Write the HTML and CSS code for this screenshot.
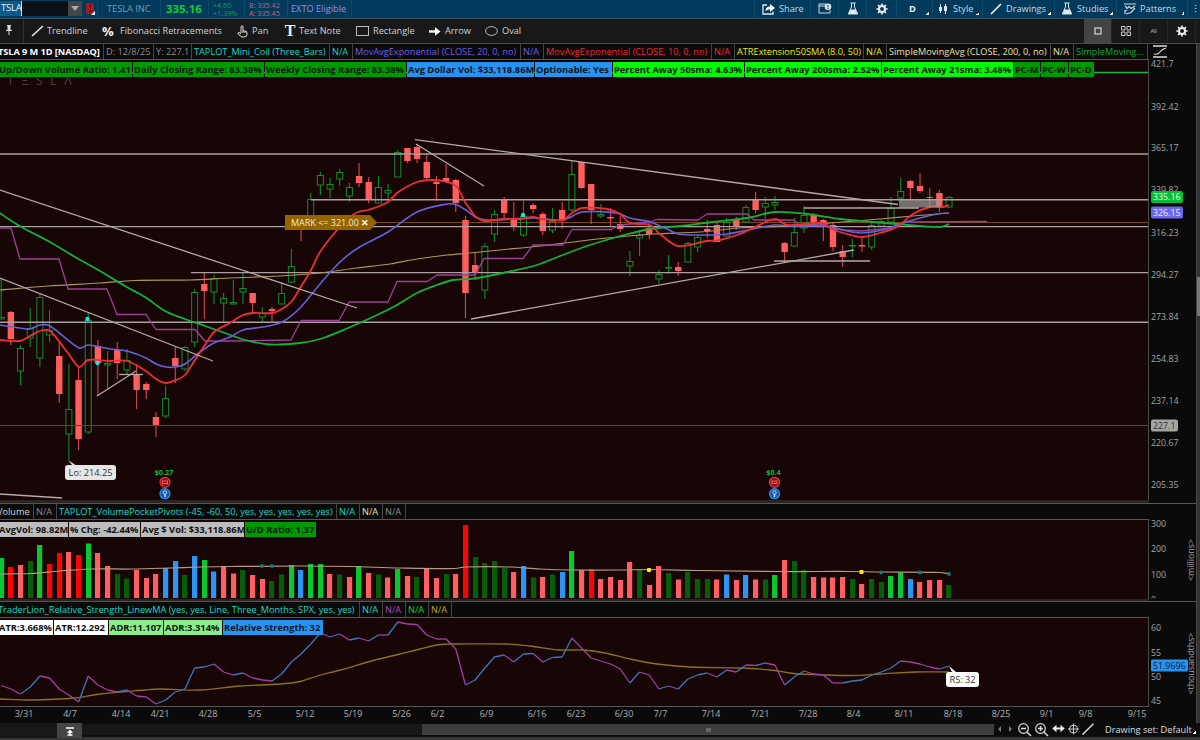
FILE: index.html
```html
<!DOCTYPE html>
<html lang="en">
<head>
<meta charset="utf-8">
<title>TSLA chart</title>
<link rel="stylesheet" href="styles.css">
</head>
<body>
<div class="app">
  <header class="topbar">
    <div class="symbol"><span class="symbol-input">TSLA</span><span class="symbol-drop"><svg width="8" height="5"><path d="M0 0h8L4 5z" fill="#aaa"/></svg></span></div>
    <div class="link-badge"><svg width="10" height="13"><rect x="0" y="0" width="8" height="11" rx="1.5" fill="#b01414"/><path d="M3 3l1.5-1v6M2.5 8.5h3" stroke="#500" fill="none"/><path d="M9 8v4H5z" fill="#fff"/></svg></div>
    <div class="tcell company">TESLA INC</div>
    <div class="tcell last">335.16</div>
    <div class="tcell two change"><span>+4.60</span><span>+1.39%</span></div>
    <div class="tcell two bidask"><span>B: 335.42</span><span>A: 335.45</span></div>
    <div class="tcell exto">EXTO Eligible</div>
    <div class="tspace"></div>
    <div class="tcell share"><svg width="13" height="12"><path d="M5 2H1v9h10V8.500" fill="none" stroke="#dfe8ee" stroke-width="1.300"/><path d="M3.500 8.500C3.500 5 5 3.500 8 3.500V1l5 4-5 4V6.500C6 6.500 4.500 7 3.500 8.500z" fill="#fff"/></svg><span>Share</span></div>
    <div class="tcell ic w28"><svg width="14" height="11"><path d="M8 1H1v9h11V7" fill="none" stroke="#cfdae2"/><path d="M1 3h7" stroke="#cfdae2"/><circle cx="10" cy="3.800" r="3.300" fill="#dfe8ee"/><path d="M10 2v2.500M10 5v1" stroke="#013a5a"/></svg></div>
    <div class="tcell ic w28"><svg width="12" height="13"><path d="M3.500 1h5M4.500 1v4L1.300 12h9.400L7.500 5V1" fill="none" stroke="#dfe8ee"/><path d="M3.500 7.500h5l2 4.500h-9z" fill="#dfe8ee"/></svg></div>
    <div class="tcell ic w29"><svg width="12" height="12" viewBox="-6 -6 12 12"><circle r="3" fill="none" stroke="#eee" stroke-width="2"/><path d="M0-3.500V-5.600M0 3.500V5.600M-3.500 0H-5.600M3.500 0H5.600M2.500-2.500L4-4M-2.500 2.500L-4 4M-2.500-2.500L-4-4M2.500 2.500L4 4" stroke="#eee" stroke-width="1.700"/></svg></div>
    <div class="tcell dcell corner"><b>D</b></div>
    <div class="tcell style corner"><svg width="11" height="12"><path d="M2.500 1v9M7.500 1v10" stroke="#dfe8ee"/><rect x="1" y="4" width="3" height="4" fill="#dfe8ee"/><rect x="6" y="3" width="3" height="5" fill="#dfe8ee"/></svg><span>Style</span></div>
    <div class="tcell drawings corner"><svg width="12" height="12"><path d="M1 11L11 1" stroke="#fff" stroke-width="1.600"/></svg><span>Drawings</span></div>
    <div class="tcell studies corner"><svg width="12" height="13"><path d="M3.500 1h5M4.500 1v4L1.300 12h9.400L7.500 5V1" fill="none" stroke="#dfe8ee"/><path d="M3.500 7.500h5l2 4.500h-9z" fill="#dfe8ee"/></svg><span>Studies</span></div>
    <div class="tcell patterns corner"><svg width="12" height="12"><path d="M0 1h12M1 2.500l2 3 2-2 2 2 4-2.500M1 11V7.500h2M2 11l5-1.500L11 5" fill="none" stroke="#cfdae2" stroke-width="1.200"/></svg><span>Patterns</span></div>
    <div class="tcell more">⋮</div>
  </header>

  <div class="drawbar">
    <div class="pin"><svg width="6" height="10"><path d="M1 .5h4M2 1v4M4 1v4M0 5.500h6M3 5v5" stroke="#ddd" fill="none"/><rect x="2" y="1" width="2" height="4" fill="#ddd"/></svg></div>
    <div class="tool t1"><svg width="13" height="12"><path d="M1 11L12 1" stroke="#eee" stroke-width="1.500"/></svg><span>Trendline</span></div>
    <div class="tool t2"><b class="pct">%</b><span>Fibonacci Retracements</span></div>
    <div class="tool t3"><svg width="11" height="13"><path d="M4 8V1.500q1-1.500 2 0V6h2q2 0 2 2v1.500q0 2.500-3 2.500H5Q3.500 12 .8 8q1-1.500 3.200.8M6 6v2M8 6v2" fill="none" stroke="#ddd"/></svg><span>Pan</span></div>
    <div class="tool t4"><b class="tee">T</b><span>Text Note</span></div>
    <div class="tool t5"><svg width="13" height="10"><rect x=".5" y=".5" width="12" height="9" fill="none" stroke="#bbb"/></svg><span>Rectangle</span></div>
    <div class="tool t6"><svg width="12" height="9"><path d="M0 4.500h7" stroke="#fff" stroke-width="2.400"/><path d="M6 .3l5.500 4.200L6 8.700z" fill="#fff"/></svg><span>Arrow</span></div>
    <div class="tool t7"><svg width="13" height="10"><ellipse cx="6.500" cy="5" rx="5.900" ry="4.400" fill="none" stroke="#bbb"/></svg><span>Oval</span></div>
    <div class="tspace"></div>
    <div class="view on"><svg width="8" height="8"><rect x="1" y="1" width="6" height="6" fill="none" stroke="#ccc" stroke-width="1.300"/></svg></div>
    <div class="view"><svg width="10" height="10"><path d="M.5.500h3.500v3.500H.5zM6 .5h3.500v3.500H6zM.5 6h3.500v3.500H.5zM6 6h3.500v3.500H6z" fill="none" stroke="#ccc"/></svg></div>
    <div class="view all">All</div>
    <div class="view"><svg width="12" height="12" viewBox="-6 -6 12 12"><circle r="3" fill="none" stroke="#eee" stroke-width="2"/><path d="M0-3.500V-5.600M0 3.500V5.600M-3.500 0H-5.600M3.500 0H5.600M2.500-2.500L4-4M-2.500 2.500L-4 4M-2.500-2.500L-4-4M2.500 2.500L4 4" stroke="#eee" stroke-width="1.700"/></svg></div>
  </div>

  <main class="workspace">
    <div class="panes">
      <section class="pane price">
        <div class="studies-row main-row">
          <span class="s a0">TSLA 9 M 1D [NASDAQ]</span><span class="s a1">D: 12/8/25</span><span class="s a2">Y: 227.1</span><span class="s a3 cyan">TAPLOT_Mini_Coil (Three_Bars)</span><span class="s n cyan">N/A</span><span class="s a5 violet">MovAvgExponential (CLOSE, 20, 0, no)</span><span class="s n violet">N/A</span><span class="s a5 red">MovAvgExponential (CLOSE, 10, 0, no)</span><span class="s n red">N/A</span><span class="s a9 yellow">ATRExtension50SMA (8.0, 50)</span><span class="s n yellow">N/A</span><span class="s a11 cream">SimpleMovingAvg (CLOSE, 200, 0, no)</span><span class="s n cream">N/A</span><span class="s a13 green">SimpleMoving...</span>
        </div>
        <div class="corner-cell"><svg width="14" height="13"><path d="M0 1h14M0 12h14" stroke="#ddd" stroke-width="1.500"/><path d="M1 9q4 1 6-2t6-4" fill="none" stroke="#ddd" stroke-width="1.200"/></svg></div>
        <div class="plot">
          <svg id="price" width="1149" height="440" viewBox="0 60 1149 440"></svg>
          <div class="watermark">TΞSLΛ</div>
          <div class="labels">
            <span class="g1 l0">Up/Down Volume Ratio: 1.41</span><span class="g1 l1">Daily Closing Range: 83.38%</span><span class="g1 l2">Weekly Closing Range: 83.38%</span><span class="b1 l3">Avg Dollar Vol: $33,118.86M</span><span class="b1 l4">Optionable: Yes</span><span class="g2 l5">Percent Away 50sma: 4.63%</span><span class="g2 l6">Percent Away 200sma: 2.52%</span><span class="g2 l7">Percent Away 21sma: 3.48%</span><span class="g1 l8">PC-M</span><span class="g1 l9">PC-W</span><span class="g1 l10">PC-D</span>
          </div>
          <div class="mark">MARK &lt;= 321.00 <b>✕</b></div>
          <div class="bubble lo">Lo: 214.25</div>
        </div>
        <svg class="axis" id="priceAxis" width="47" height="440" viewBox="1149 60 47 440"></svg>
      </section>
      <section class="pane volume">
        <div class="studies-row">
          <span class="s v0">Volume</span><span class="s v1 grey">N/A</span><span class="s v2 cyan">TAPLOT_VolumePocketPivots (-45, -60, 50, yes, yes, yes, yes, yes)</span><span class="s n cyan">N/A</span><span class="s n cream">N/A</span><span class="s n grey">N/A</span>
        </div>
        <div class="corner-cell"></div>
        <div class="plot">
          <svg id="volume" width="1149" height="79" viewBox="0 520 1149 79"></svg>
          <div class="labels">
            <span class="w1 m0">AvgVol: 98.82M</span><span class="w1 m1">% Chg: -42.44%</span><span class="w1 m2">Avg $ Vol: $33,118.86M</span><span class="g1 m3">U/D Ratio: 1.37</span>
          </div>
        </div>
        <svg class="axis" id="volumeAxis" width="47" height="79" viewBox="1149 520 47 79"></svg>
      </section>
      <section class="pane strength">
        <div class="studies-row">
          <span class="s r0 cyan">TraderLion_Relative_Strength_LinewMA (yes, yes, Line, Three_Months, SPX, yes, yes)</span><span class="s n cyan2">N/A</span><span class="s n mag">N/A</span><span class="s n green2">N/A</span><span class="s n gold">N/A</span>
        </div>
        <div class="corner-cell"></div>
        <div class="plot">
          <svg id="strength" width="1149" height="88" viewBox="0 618 1149 88"></svg>
          <div class="labels">
            <span class="w2 q0">ATR:3.668%</span><span class="w2 q1">ATR:12.292</span><span class="p1 q2">ADR:11.107</span><span class="p1 q3">ADR:3.314%</span><span class="b1 q4">Relative Strength: 32</span>
          </div>
          <div class="bubble rs">RS: 32</div>
        </div>
        <svg class="axis" id="strengthAxis" width="47" height="88" viewBox="1149 618 47 88"></svg>
      </section>
      <svg class="dates" id="dates" width="1196" height="17" viewBox="0 706 1196 17"></svg>
    </div>
    <div class="edge"><div class="grip"></div></div>
  </main>

  <footer class="bottombar">
    <div class="jump"><svg width="8" height="9"><path d="M0 1h8" stroke="#fff" stroke-width="1.500"/><path d="M4 2.500l3 3.500H1z" fill="#fff"/><path d="M1.500 8h5M4 5v3" stroke="#fff" stroke-width="1.500"/></svg></div>
    <div class="scroll"><i></i></div>
    <div class="nav"><svg width="16" height="6"><path d="M4 0v6L1 3zM12 0v6l3-3z" fill="#777"/></svg></div>
    <div class="zooms">
      <svg width="14" height="14"><circle cx="5.500" cy="5.500" r="4.800" fill="none" stroke="#ddd" stroke-width="1.200"/><path d="M3 5.500h5M9 9l4 4" stroke="#ddd" stroke-width="1.500"/></svg>
      <svg width="14" height="14"><circle cx="5.500" cy="5.500" r="4.800" fill="none" stroke="#ddd" stroke-width="1.200"/><path d="M3 5.500h5M5.500 3v5M9 9l4 4" stroke="#ddd" stroke-width="1.500"/></svg>
      <svg width="13" height="14"><path d="M2 5.500h9" stroke="#eee" stroke-width="2"/><path d="M4.500 1.800v7.400L.3 5.500zM8.500 1.800v7.400l4.200-3.700z" fill="#eee"/></svg>
      <svg width="11" height="14"><circle cx="5.500" cy="6" r="4" fill="none" stroke="#ccc"/><path d="M5.500 .5v11M0 6h11" stroke="#ccc"/></svg>
      <svg width="12" height="14"><path d="M.5 11.500L11.500 .800" stroke="#ddd" stroke-width="1.500"/></svg>
    </div>
    <div class="set">Drawing set: Default</div>
  </footer>
</div>
<script src="chart.js"></script>
</body>
</html>
```

FILE: styles.css
```css
* { box-sizing: border-box; }
body {
  margin: 0;
  background: #0a0a0a;
  color: #d2d2d2;
  font-family: "Open Sans", "Noto Sans", sans-serif;
  font-size: 9.2px;
  line-height: 14px;
}
svg { display: block; flex: none; }
.app { width: 1200px; height: 740px; overflow: hidden; display: flex; flex-direction: column; white-space: nowrap; }

.topbar { height: 19px; flex: none; display: flex; background: #013a5a; border-bottom: 1px solid #3b4f5c; }
.tcell { display: flex; align-items: center; gap: 5px; border-right: 1px solid #0c4a6b; padding-bottom: 1px; }
.tspace { flex: 1; }
.symbol { width: 82px; display: flex; padding: 1px 0 2px; }
.symbol-input { width: 68px; padding-left: 1px; color: #e8f0f6; background: linear-gradient(90deg, #0a5a8e 21px, #ddd 21px, #ddd 22px, #0b1014 22px); font-size: 9.5px; letter-spacing: -.2px; }
.symbol-drop { width: 14px; background: #454545; display: grid; place-items: center; }
.link-badge { width: 16px; padding: 3px 0 0 4px; border-right: 1px solid #0c4a6b; }
.company { width: 63px; padding-left: 9px; color: #7b9aae; }
.last { width: 48px; padding-left: 5px; color: #0bcd3c; font-weight: 700; font-size: 11.4px; }
.tcell.two { flex-direction: column; align-items: flex-start; gap: 0; font-size: 7.2px; line-height: 8px; padding: 1px 0 0 4px; }
.change { width: 36px; color: #15a04c; }
.bidask { width: 43px; color: #cc6074; }
.exto { width: 64px; padding-left: 3px; color: #a488f4; }
.share { width: 57px; padding-left: 7px; border-left: 1px solid #0c4a6b; gap: 4px; }
.share, .style, .drawings, .studies, .patterns { color: #ccd9e2; }
.ic { justify-content: center; }
.w28 { width: 28px; } .w29 { width: 30px; }
.corner { background: linear-gradient(135deg, transparent 50%, #fff 50%) right 3px bottom 3px / 3px 3px no-repeat; }
.dcell { width: 36px; padding-left: 12px; color: #eee; }
.style { width: 50px; padding-left: 5px; gap: 4px; }
.drawings { width: 72px; padding-left: 7px; gap: 4px; }
.studies { width: 62px; padding-left: 6px; gap: 4px; }
.patterns { width: 71px; padding-left: 7px; gap: 4px; }
.more { width: 12px; padding-left: 3px; border: 0; color: #eee; }

.drawbar { height: 25px; flex: none; display: flex; align-items: stretch; background: #181818; border-bottom: 1px solid #4a4a4a; }
.pin { width: 24px; padding: 6px 0 0 6px; border-right: 1px solid #303030; }
.tool { display: flex; align-items: center; gap: 3px; color: #d2d2d2; }
.t1 { width: 71px; padding-left: 7px; }
.t2 { width: 135px; padding-left: 7px; }
.t3 { width: 47px; padding-left: 7px; gap: 4px; }
.t4 { width: 72px; padding-left: 7px; }
.t5 { width: 73px; padding-left: 7px; gap: 4px; }
.t6 { width: 57px; padding-left: 7px; gap: 4px; }
.t7 { width: 50px; padding-left: 6px; gap: 4px; }
.pct { font-size: 13px; width: 15px; color: #eee; }
.tee { font: 700 16px "Liberation Serif", serif; width: 12px; text-align: center; color: #eee; }
.view { width: 28px; display: grid; place-items: center; border-right: 1px solid #252525; }
.view.on { background: #444; }
.view:last-child { margin-right: 4px; }
.all { font-size: 6px; color: #bbb; letter-spacing: -.3px; }

.workspace { height: 679px; flex: none; display: flex; }
.panes { width: 1196px; display: flex; flex-direction: column; }
.edge { width: 4px; background: #333; border-left: 1px solid #484848; padding-top: 233px; }
.grip { height: 39px; background: #777; }

.pane { flex: none; display: grid; grid-template-columns: 1149px 47px; background: linear-gradient(90deg, #2a2424 1149px, #0a0a0a 1149px); }
.price { height: 459px; grid-template-rows: 16px 440px; }
.volume { height: 98px; grid-template-rows: 16px 79px; }
.strength { height: 105px; grid-template-rows: 16px 88px; }
.volume, .strength { border-top: 1px solid #555; }
.studies-row { display: flex; background: #0a0a0a; border-bottom: 1px solid #555; }
.s { flex: none; height: 100%; border-right: 1px solid #444; padding-left: 2px; line-height: 15px; }
.n { width: 23px; }
.a0 { width: 104px; color: #fff; font-weight: 700; padding: 0; text-indent: -2px; letter-spacing: -.05px; }
.a1 { width: 50px; color: #8e8e8e; } .a2 { width: 38px; color: #8e8e8e; }
.a3 { width: 138px; } .a5 { width: 168px; } .a9 { width: 129px; } .a11 { width: 164px; } .a13 { width: 74px; }
.v0 { width: 34px; padding: 0; text-indent: -3px; } .v1 { width: 23px; } .v2 { width: 280px; }
.r0 { width: 360px; padding: 0; text-indent: -2px; }
.cyan, .cyan2 { color: #20d4c4; } .violet { color: #6c60e4; } .red { color: #ee2c30; } .yellow { color: #e8e818; }
.cream { color: #e8e0ac; } .green { color: #12a33c; } .green2 { color: #18cc28; } .grey { color: #8a8a8a; }
.mag { color: #b046bc; } .gold { color: #c2a42c; }
.corner-cell { padding: 1px 0 0 4px; background: #0a0a0a; }
.plot { position: relative; background: #180506; overflow: hidden; border-right: 1px solid #4a4a4a; }
.axis { background: #0a0a0a; overflow: visible; }
.labels { position: absolute; left: 0; top: 2px; display: flex; gap: 1px; font-weight: 700; font-size: 9.3px; line-height: 15px; }
.labels span { height: 15px; padding-left: 1px; color: #031a08; }
.labels .g1 { background: #009a00; } .labels .g2 { background: #00fa00; } .labels .b1 { background: #2893ee; color: #04162c; }
.labels .w1 { background: #bdbdbd; color: #111; } .labels .w2 { background: #fff; color: #111; } .labels .p1 { background: #8cec8c; }
.labels .l0, .labels .m0, .labels .q0 { padding: 0; text-indent: -1px; }
.l0 { width: 132px; } .l1 { width: 131px; } .l2 { width: 141px; } .l3 { width: 127px; } .l4 { width: 77px; } .l5 { width: 131px; }
.l6 { width: 136px; } .l7 { width: 131px; } .l8 { width: 26px; } .l9 { width: 27px; } .l10 { width: 25px; }
.m0 { width: 68px; } .m1 { width: 71px; } .m2 { width: 103px; } .m3 { width: 71px; }
.q0 { width: 53px; } .q1 { width: 54px; } .q2 { width: 54px; } .q3 { width: 58px; } .q4 { width: 100px; }
.watermark { position: absolute; left: 7px; top: 14px; color: #4e4040; font-size: 12.5px; letter-spacing: 7.500px; line-height: 14px; clip-path: inset(4px 0 0 0); }
.mark { position: absolute; left: 285px; top: 155px; width: 92px; height: 15px; padding-left: 6px; color: #f3ead2; background: #946400; clip-path: polygon(0 0, 85px 0, 92px 50%, 85px 100%, 0 100%); line-height: 15px; font-size: 9px; }
.mark b { color: #fff; font-size: 9px; }
.bubble { position: absolute; height: 15px; border-radius: 3px; text-align: center; color: #333; line-height: 16px; }
.lo { left: 65px; top: 405px; width: 51px; background: #e6e6e6; }
.rs { left: 946px; top: 54px; width: 33px; background: #fff; }

.bottombar { height: 17px; flex: none; display: flex; background: #0c0c0c; border-bottom: 3px solid #363636; }
.jump { width: 83px; height: 15px; padding: 4px 0 0 66px; background: linear-gradient(90deg, #171717 57px, #444 57px, #444 82px, #171717 82px); }
.scroll { width: 911px; height: 11px; margin-top: 1px; display: grid; justify-items: start; align-items: center; background: linear-gradient(90deg, #171717 339px, #3d3d3d 339px); padding-left: 623px; }
.scroll i { width: 5px; height: 4px; background: #666; }
.nav { width: 24px; padding: 3px 0 0 3px; }
.zooms { display: flex; gap: 3px; width: 87px; }
.set { color: #ddd; line-height: 13px; width: 95px; background: linear-gradient(135deg, transparent 50%, #fff 50%) right 4px bottom 3px / 3px 3px no-repeat; }

.ax { fill: #a4a4a4; font-size: 8.800px; }
.date { fill: #b2b2b2; font-size: 9px; text-anchor: middle; }
```

FILE: chart.js
```js
const byId = id => document.getElementById(id);
const X0 = 1.2, STEP = 9.672;
const bx = i => X0 + i * STEP;
const line = (x1, y1, x2, y2, c, w = 1, o = 1) => `<line x1="${x1}" y1="${y1}" x2="${x2}" y2="${y2}" stroke="${c}" stroke-width="${w}" opacity="${o}"/>`;
const rect = (x, y, w, h, c, extra = '') => `<rect x="${x}" y="${y}" width="${w}" height="${h}" fill="${c}" ${extra}/>`;
const poly = (pts, c, w) => `<polyline points="${pts}" fill="none" stroke="${c}" stroke-width="${w}" stroke-linejoin="round"/>`;
const text = (x, y, s, cls, extra = '') => `<text x="${x}" y="${y}" class="${cls}" ${extra}>${s}</text>`;

const curve = (pts, c, w) => {
  const q = pts.split(' ').map(s => s.split(',').map(Number));
  const m = q.map((pt, i) => {
    if (!i || i === q.length - 1) return null;
    return (q[i + 1][1] - q[i - 1][1]) / (q[i + 1][0] - q[i - 1][0]);
  });
  const slope = (i, j) => (q[j][1] - q[i][1]) / (q[j][0] - q[i][0]);
  let d = `M${q[0]}`;
  for (let i = 1; i < q.length; i++) {
    const a = m[i - 1] ?? slope(i - 1, i), b = m[i] ?? slope(i - 1, i), h = (q[i][0] - q[i - 1][0]) / 3;
    d += `C${q[i - 1][0] + h},${q[i - 1][1] + a * h} ${q[i][0] - h},${q[i][1] - b * h} ${q[i]}`;
  }
  return `<path d="${d}" fill="none" stroke="${c}" stroke-width="${w}"/>`;
};

/* candles: direction, high, body top, body bottom, low */
const candles = `g278,317,319,319 r311,312,339,345 g345,348,371,385 g308,328,338,347 g293,297,358,367 g310,330,335,342 r342,356,394,403
g364,409,434,460 r367,380,439,450 g312,320,432,434 r340,346,363,396 g351,363,365,389 r342,350,363,379 g349,360,370,375 r364,374,390,409
r382,384,390,399 r412,417,425,437 g386,398,416,418 r347,358,366,383 g346,347,369,371 g289,292,342,347 r273,284,291,319 g275,278,292,304
g293,298,303,323 g280,302,304,304 g272,288,292,304 r293,293,303,314 g307,313,317,322 r307,309,311,322 g283,293,304,304 g249,266,282,283
r219,220,229,241 g193,199,229,230 g172,175,185,195 g178,184,189,198 g169,172,179,186 g183,187,196,202 r163,176,183,187 r177,182,200,203
g176,187,203,203 g184,190,193,202 g150,152,177,177 r148,148,161,163 r144,147,159,163 r153,162,178,181 r176,182,184,201 r164,178,182,183
r179,180,203,212 r216,220,293,318 r252,265,273,280 g243,246,290,299 g210,214,234,242 r197,199,213,219 r202,220,226,231 g201,216,235,237
r203,205,209,213 r212,214,231,235 g208,221,230,233 r202,210,220,229 g161,174,210,212 r162,162,188,189 r184,184,210,224 g204,214,216,218
r208,217,218.500,227 r216,224,229,232 g251,261,266,276 g230,235,238,256 r220,228,234,239 g270,274,279,284 g255,267,268,274 r262,267,271,276
g242,243,262,262 g235,237,247,252 r220,229,231,238 r223,225,242,242 g218,222,236,237 r217,219,226,230 g205,207,222,222 r192,199,210,213
g197,203,207,219 g196,202,205,210 r242,243,252,262 g218,232,246,247 g206,215,228,233 r213,215,222,223 r219,220,225,241 r222,225,247,251
r245,251,257,267 g239,245,246,257 r237,245,246.500,252 g223,225,247,250 g220,221,226,226 g197,208,222,224 g178,191,198,202 r180,181,188,200
r173,186,191,193 r188,197,198,207 r190,193,207,212 g196,197,207,208`.split(/\s+/);

let p = '';
p += line(0, 72.5, 1149, 72.5, '#16b83c', 1.5);
p += line(376, 222.5, 1149, 222.5, '#744c0c', 1.2);
candles.forEach((s, i) => {
  const [h, t, b, l] = s.slice(1).split(',').map(Number), x = bx(i);
  if (s[0] === 'g') {
    p += line(x, h, x, t, '#118c2c', 1.1) + line(x, b, x, l, '#118c2c', 1.1);
    p += rect(x - 3, t + .5, 6, Math.max(b - t - .5, .6), 'none', 'stroke="#118c2c"');
  } else {
    p += line(x, h, x, l, '#d04c4c', 1.1) + rect(x - 3.2, t, 6.4, b - t, '#ff5e5e');
  }
});
[[0, 154], [311, 199.700], [0, 226.600], [191, 272.600], [0, 322.300]].forEach(([x, y]) => { p += line(x, y, 1149, y, '#aaa0a0', 1.4); });
p += line(0, 425.5, 1149, 425.5, '#544646', 1);
p += curve('0,290 48,286 100,283 135,280.500 190,280 230,278 280,276 320,273 357,268 390,264 417,259 447,255 470,253 500,250 540,246 573,242 607,238 653,234 700,232 740,228 787,226 830,223 880,219 913,216 949,213', '#ab9858', 1.2);
p += poly('0,228 11,228 20,259 59,259 68,289 107,289 117,314.500 146,314.500 156,329.500 195,329.500 205,341 230,341 291,340 301,320.500 339,320.500 349,302 388,302 397,281.500 427,281.500 437,275 475,275 484,258.500 523,258.500 533,245 563,245 572,229.500 611,229.500 620,225 650,222 657,219.500 698,220 707,214 747,214 754,220 794,220 799,225 823,225 843,230 862,231 893,228 904,222 987,221.500', '#9c4298', 1.3);
p += curve('0,213 10,220 25,229 50,242 75,257 100,271 125,286 145,297 165,311 185,319 205,326 225,333 245,340 270,344.500 300,343 320,339 348,328 377,315 397,305 417,293 437,285 453,280 470,279 483,277 507,272 537,265 560,256 590,245 617,237 650,229 680,226 713,222 747,218 775,212 807,214 840,219 873,222 897,224 940,227 949,224', '#10b236', 1.8);
p += curve('0,325 20,328 30,329 40,325 50,326 79,348 88,345 110,349 127,351 146,358 156,364 166,367 176,367 185,364 200,352 214,343 230,337 243,330 263,327 282,322 300,308 320,284 340,262 358,248 388,232 417,212 447,204 457,205 470,213 475,217 487,220 533,218 563,220 582,212 617,213 630,218 650,222 667,229 678,234 707,235 727,234 753,229 775,225 793,226 823,226 847,231 862,233 883,230 900,224 920,218 937,214 949,213', '#6560dc', 1.6);
p += curve('0,340 20,341 30,336 40,331 50,331 68,353 79,367 88,360 110,361 127,361 146,371 156,379 166,383 176,380 185,375 195,360 205,345 214,332 230,323 243,315 253,313 272,313 282,309 292,301 300,288 310,272 320,252 337,230 347,219 358,212 368,210 388,202 397,193 417,182 433,180 447,182 457,187 465,202 470,209 475,216 485,221 503,219 520,219 533,217 543,219 563,220 572,213 582,208 607,209 620,214 630,223 650,225 660,234 678,246 707,241 720,240 737,235 753,228 775,219 787,225 823,223 832,229 847,234 862,237 880,233 897,227 913,214 930,207 943,207 949,205', '#ec2f33', 1.8);
p += rect(899, 200, 41, 7.500, '#9d9999', 'opacity=".72"');
[[0, 190, 357, 308], [0, 278, 213, 361], [97, 396, 136, 371], [119, 374.500, 143, 374.500], [0, 494, 62, 498], [415, 139.700, 898, 204.500], [416, 144, 484, 186], [471, 319, 854, 250], [774, 261, 870, 261], [804, 208, 919, 208]]
  .forEach(a => { p += line(...a, '#b3a9a9', 1.3); });
[[87.500, 319], [97.500, 363], [523, 215]].forEach(([x, y]) => { p += `<circle cx="${x}" cy="${y}" r="2.200" fill="#19e4e4"/>`; });
p += '<path d="M68 460l5 6h4z" fill="#e6e6e6"/>';
[[165, '$0.27'], [774.500, '$0.4']].forEach(([x, s]) => {
  p += text(x - 1, 475, s, 'date', 'style="fill:#15b934;font-size:7.200px;font-weight:700"');
  p += `<circle cx="${x}" cy="482.300" r="5" fill="#811" stroke="#e23c3c" stroke-width="1.200"/><path d="M${x - 2.500} 481h5M${x - 2} 483.500h4M${x - 2.500} 484.500v-4M${x + 2.500} 484.500v-4" stroke="#f55" fill="none"/>`;
  p += `<circle cx="${x}" cy="493.700" r="5" fill="#1d56a8" stroke="#348cf0" stroke-width="1.200"/><path d="M${x} 497v-3" stroke="#bdf" stroke-width="1.500"/><circle cx="${x}" cy="492.500" r="1.700" fill="none" stroke="#bdf"/>`;
});
byId('price').innerHTML = p;

let a = '';
[['421.7', 63.500], ['392.42', 106.500], ['365.17', 148], ['339.82', 190], ['316.23', 233], ['294.27', 274.500], ['273.84', 317], ['254.83', 358.500], ['237.14', 401], ['220.67', 442.500], ['205.35', 485]]
  .forEach(([s, y]) => { a += text(1151, y + 3, s, 'ax'); });
a += rect(1151, 191, 32, 12, '#08be34', 'rx="2"') + text(1153, 200.300, '335.16', 'ax', 'style="fill:#e8ffe8"');
a += rect(1151, 206.500, 32, 12, '#6a66f0', 'rx="2"') + text(1153, 215.800, '326.15', 'ax', 'style="fill:#f0f0ff"');
a += rect(1151, 419.500, 27, 12, '#a4a4a4', 'rx="2"') + text(1153, 428.800, '227.1', 'ax', 'style="fill:#333"');
byId('priceAxis').innerHTML = a;

/* volume: colour key + bar top */
const vcol = { g: '#08c832', d: '#055f08', r: '#fa0404', p: '#ff5f62', b: '#2c95f4' };
const vols = `g558 r567 p565 d561 g545 r564 r553 p552 r555 g543.500 p553 p566 d574 d578.500 p570 p578 p574 b568 b561 d575 b556 g560 b571.500 p566 p573.500 d570 p575 p579 d581 d574.500 g565 b570 g564 g564 p574 d574.500 p577 g566 p573 d574.500 p577.500 g569 p576 d577 p568 p578 d574 p574 r525 d557 d563 d561 d568 p572 b566 d577.500 p577 d574.500 b572 g551 p570 r569 p579 p577 p580 p562 d569 p585 p566 d573 p579.500 d572 d579 d579 p579.500 b574.500 p580 b575 p579.500 d579.500 g575 p560 d561 d570 p577 p577.500 p577.500 p577 d579 p584 d579 d582 g576 g572.500 b579 p582 p580 p580 d585`.split(' ');
let v = '';
vols.forEach((s, i) => { const y = +s.slice(1); v += rect(Math.round(bx(i) - 2.600), y, 5.200, 598 - y, vcol[s[0]]); });
v += curve('0,574 30,573.500 60,571 90,569 130,569 170,568 200,567 230,566.500 300,566 350,566.500 400,568 455,568.500 465,567 510,567 540,569 570,570 620,570 650,569.500 700,570.500 780,571.500 850,571.500 880,572 940,572.500 949,574', '#b69c80', 1.2);
[[262, 566], [272, 566], [881, 572.500], [920, 572.500], [949, 574]].forEach(([x, y]) => { v += `<circle cx="${x}" cy="${y}" r="1.900" fill="#0b7f78"/>`; });
[[649, 570], [861.500, 572]].forEach(([x, y]) => { v += rect(x - 2, y - 2, 4, 4, '#fff000', 'rx="1"'); });
byId('volume').innerHTML = v;
byId('volumeAxis').innerHTML = text(1151, 527, '300', 'ax') + text(1151, 552.300, '200', 'ax') + text(1151, 578, '100', 'ax')
  + '<clipPath id="c"><rect x="1149" y="590" width="47" height="8.500"/></clipPath>' + text(1151, 603, '0', 'ax', 'clip-path="url(#c)"')
  + text(0, 0, '&lt;millions&gt;', 'ax', 'transform="translate(1194 581) rotate(-90)"');

const rs = [685.5, 689, 694, 687, 676, 678, 689, 695, 702, 676, 685, 690, 692, 690, 696, 697, 704, 700, 692, 689, 668, 667, 664, 672, 675, 673, 678, 680, 681, 674, 662, 654, 644, 633, 637, 634, 640, 638, 641, 635, 635, 622, 624, 624.5, 635, 639, 639, 649, 685, 680, 668, 657, 655, 662, 654, 653.5, 662, 657.5, 657, 638, 648, 658, 661, 664, 669, 683, 672, 675, 689, 686, 689, 679, 675, 673, 677, 670, 672, 665, 665.5, 663, 665, 685, 677, 671, 674, 675, 683, 683, 681, 680, 675, 672, 668, 661, 662, 664, 667, 669, 666];
let r = '';
r += curve('0,699 30,700 75,698 100,694 145,690 160,689 200,690 240,686 280,684 300,681.500 317,676 340,670 375,660 400,654 420,649 440,644.500 457,644 507,644 530,646 560,650 583,650 605,653 630,659 657,664 690,667 740,668 770,670 790,673 800,674 850,675.500 880,674 915,672 949,672', '#8a711c', 1.3);
for (let i = 1; i < rs.length; i++) r += line(bx(i - 1), rs[i - 1], bx(i), rs[i], rs[i] < rs[i - 1] ? '#3d78be' : '#a23fa6', 1.3);
r += '<path d="M949 666l3 6h4z" fill="#fff"/>';
byId('strength').innerHTML = r;
byId('strengthAxis').innerHTML = text(1151, 631, '60', 'ax') + text(1151, 655.5, '55', 'ax') + text(1151, 679.5, '50', 'ax') + text(1151, 703.5, '45', 'ax')
  + text(0, 0, '&lt;thousandths&gt;', 'ax', 'transform="translate(1194 694.500) rotate(-90)"')
  + rect(1151, 659.5, 37, 12, '#2893ee', 'rx="1.500"') + text(1153, 668.800, '51.9696', 'ax', 'style="fill:#06213c"');

byId('dates').innerHTML = [['3/31', 24], ['4/7', 70], ['4/14', 121], ['4/21', 160], ['4/28', 208], ['5/5', 254.500], ['5/12', 305], ['5/19', 353], ['5/26', 401.500], ['6/2', 437.500], ['6/9', 486.500], ['6/16', 537], ['6/23', 576], ['6/30', 624], ['7/7', 660.500], ['7/14', 711], ['7/21', 760], ['7/28', 808], ['8/4', 853.500], ['8/11', 904], ['8/18', 953], ['8/25', 1001], ['9/1', 1046.500], ['9/8', 1085.500], ['9/15', 1137]]
  .map(([s, x]) => text(x, 717.3, s, 'date')).join('') + line(0, 706.500, 1149, 706.500, '#555', 1);
```
